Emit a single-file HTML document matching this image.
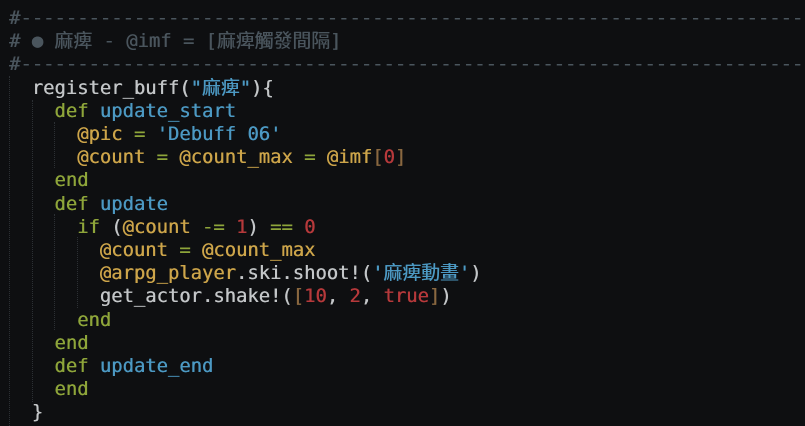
<!DOCTYPE html>
<html><head><meta charset="utf-8"><style>
html,body{margin:0;padding:0;background:#0e0f11;width:805px;height:426px;overflow:hidden}
pre{margin:0;position:absolute;left:9px;top:7px;font-family:"DejaVu Sans Mono","Liberation Mono","Noto Sans CJK TC",monospace;font-size:18.85px;line-height:23.2px;color:#c3c6c8;white-space:pre;text-shadow:0.4px 0 0 currentColor}
.c{color:#4a555d}.k{color:#8ea53a}.f{color:#4c99c3}.i{color:#cda54a}.s{color:#4c99c3}.n{color:#b6393b}.b{color:#8a6840}
.g{position:absolute;width:0;border-left:1px dotted #2c3034}
</style></head><body>
<div class="g" style="left:9px;top:76px;height:350px"></div>
<div class="g" style="left:32px;top:100px;height:302px"></div>
<div class="g" style="left:54px;top:122px;height:46px"></div>
<div class="g" style="left:54px;top:214px;height:116px"></div>
<div class="g" style="left:77px;top:237px;height:71px"></div>
<pre><span class="c">#------------------------------------------------------------------------</span>
<span class="c"># ● 麻痺 - @imf = [麻痺觸發間隔]</span>
<span class="c">#------------------------------------------------------------------------</span>
  register_buff(<span class="s">"麻痺"</span>){
    <span class="k">def</span> <span class="f">update_start</span>
      <span class="i">@</span><span class="i">pic</span> <span class="k">=</span> <span class="s">'Debuff 06'</span>
      <span class="i">@count</span> <span class="k">=</span> <span class="i">@count_max</span> <span class="k">=</span> <span class="i">@imf</span><span class="b">[</span><span class="n">0</span><span class="b">]</span>
    <span class="k">end</span>
    <span class="k">def</span> <span class="f">update</span>
      <span class="k">if</span> (<span class="i">@count</span> <span class="k">-=</span> <span class="n">1</span>) <span class="k">==</span> <span class="n">0</span>
        <span class="i">@count</span> <span class="k">=</span> <span class="i">@count_max</span>
        <span class="i">@arpg_player</span>.ski.shoot!(<span class="s">'麻痺動畫'</span>)
        get_actor.shake!(<span class="b">[</span><span class="n">10</span>, <span class="n">2</span>, <span class="n">true</span><span class="b">]</span>)
      <span class="k">end</span>
    <span class="k">end</span>
    <span class="k">def</span> <span class="f">update_end</span>
    <span class="k">end</span>
  }</pre>
</body></html>
